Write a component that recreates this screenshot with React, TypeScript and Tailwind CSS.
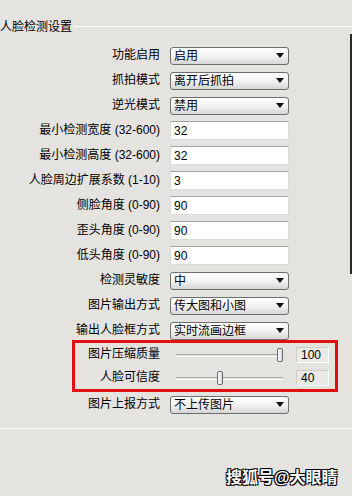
import type { ReactNode } from "react";

type Row = { label: string; kind: "select" | "input"; value: string };

const rows: Row[] = [
  { label: "功能启用", kind: "select", value: "启用" },
  { label: "抓拍模式", kind: "select", value: "离开后抓拍" },
  { label: "逆光模式", kind: "select", value: "禁用" },
  { label: "最小检测宽度 (32-600)", kind: "input", value: "32" },
  { label: "最小检测高度 (32-600)", kind: "input", value: "32" },
  { label: "人脸周边扩展系数 (1-10)", kind: "input", value: "3" },
  { label: "侧脸角度 (0-90)", kind: "input", value: "90" },
  { label: "歪头角度 (0-90)", kind: "input", value: "90" },
  { label: "低头角度 (0-90)", kind: "input", value: "90" },
  { label: "检测灵敏度", kind: "select", value: "中" },
  { label: "图片输出方式", kind: "select", value: "传大图和小图" },
  { label: "输出人脸框方式", kind: "select", value: "实时流画边框" },
];

const font = "font-['Liberation_Sans','Noto_Sans_CJK_SC',sans-serif]";

function Select({ value }: { value: string }) {
  return (
    <div className="flex h-[18px] w-[119px] items-center justify-between rounded-[3px] border border-[#6e6e6e] bg-linear-to-b from-white via-[#f2f2f2] to-[#d6d6d6] pl-[3px] pr-[4px] text-[12px] leading-none text-black">
      <span>{value}</span>
      <svg width="8" height="5" viewBox="0 0 8 5">
        <path d="M0 0h8L4 5z" fill="#111" />
      </svg>
    </div>
  );
}

function Input({ value }: { value: string }) {
  return (
    <div className="flex h-[19px] w-[119px] items-center border border-[#dcdcdc] border-t-[#a3a3a3] bg-white pl-[3px] text-[12px] leading-none text-black">
      {value}
    </div>
  );
}

function FormRow({ label, children, h = "h-[25px]", labelW = "w-[160px]" }: { label: string; children: ReactNode; h?: string; labelW?: string }) {
  return (
    <div className={`flex items-center ${h}`}>
      <div className={`${labelW} shrink-0 pb-[2px] text-right text-[12px] leading-none text-black`}>{label}</div>
      {children}
    </div>
  );
}

function Slider({ pos, value }: { pos: number; value: string }) {
  return (
    <div className="flex items-center">
      <div className="relative ml-[16px] h-[14px] w-[107px]">
        <div className="absolute left-0 right-0 top-[6px] h-[3px] border-t border-t-[#a8a8a8] border-b border-b-white" />
        <div
          className="absolute top-0 h-[14px] w-[6px] rounded-[2px] border border-[#6a6a6a] bg-linear-to-r from-white to-[#d8d8d8]"
          style={{ left: pos }}
        />
      </div>
      <div className="ml-[13px] flex h-[16px] w-[33px] items-center border border-[#cfcdc9] border-b-white border-r-white bg-[#ebe9e6] pl-[4px] text-[12px] leading-none text-black">
        {value}
      </div>
    </div>
  );
}

export default function App() {
  return (
    <div className={`relative h-[496px] w-[352px] overflow-hidden bg-[#e5e3e0] ${font}`}>
      <div className="flex h-[43px] items-start pt-[20px]">
        <span className="text-[12px] leading-[14px] text-black">人脸检测设置</span>
        <div className="ml-[2px] mt-[6px] h-px flex-1 bg-white" />
      </div>

      {rows.map((r) => (
        <FormRow key={r.label} label={r.label}>
          <div className="ml-[10px]">{r.kind === "select" ? <Select value={r.value} /> : <Input value={r.value} />}</div>
        </FormRow>
      ))}

      <div className="ml-[72px] mt-[-3px] w-[266px] border-[3px] border-[#e0100f]">
        <FormRow label="图片压缩质量" h="h-[23px]" labelW="w-[85px]">
          <Slider pos={101} value="100" />
        </FormRow>
        <FormRow label="人脸可信度" h="h-[23px]" labelW="w-[85px]">
          <Slider pos={41} value="40" />
        </FormRow>
      </div>

      <FormRow label="图片上报方式">
        <div className="ml-[10px]">
          <Select value="不上传图片" />
        </div>
      </FormRow>

      <div className="mt-[11px] h-px w-full bg-white" />

      <div className="absolute right-0 top-[34px] h-[240px] w-[2px] bg-[#2a2a2a]" />

      <div className="absolute left-[226px] top-[468px] text-[16px] font-bold leading-[20px] text-white [text-shadow:1px_1px_0_#000,-1px_-1px_0_#000,1px_-1px_0_#000,-1px_1px_0_#000]">
        搜狐号@大眼睛
      </div>
    </div>
  );
}
